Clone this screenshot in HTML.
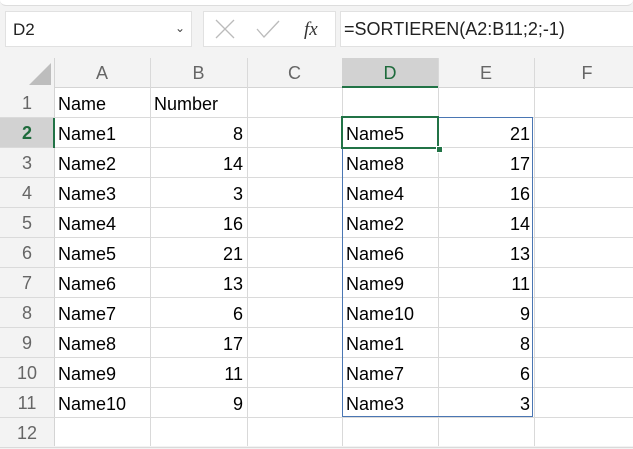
<!DOCTYPE html>
<html><head><style>
body{margin:0;width:633px;height:446px;overflow:hidden;background:#f3f3f3;font-family:"Liberation Sans",sans-serif;position:relative}
.a{position:absolute}
.box{position:absolute;background:#fff;border:1px solid #e1e1e1}
.c{position:absolute;font-size:18px;color:#000;line-height:30px;white-space:nowrap}
.h{position:absolute;color:#666;font-size:18px;text-align:center;line-height:31px}
</style></head><body>
<div class="a" style="left:0;top:0;width:633px;height:5px;background:#fff;border-bottom:1px solid #ddd;border-radius:0 0 6px 6px"></div>
<div class="box" style="left:5px;top:11px;width:185px;height:34px"></div>
<div class="c" style="left:13px;top:15px;font-size:17px;color:#222">D2</div>
<div class="c" style="left:175px;top:13px;font-size:12px;color:#444">&#8964;</div>
<div class="box" style="left:203px;top:11px;width:131px;height:34px"></div>
<svg class="a" style="left:214px;top:18px" width="110" height="22"><path d="M2 2L20 20M20 2L2 20" stroke="#bbb" stroke-width="1.3" fill="none"/><path d="M43 11L50 19L65 3" stroke="#bbb" stroke-width="1.3" fill="none"/><text x="90" y="17" font-family="Liberation Serif" font-style="italic" font-size="19" fill="#333">fx</text></svg>
<div class="box" style="left:340px;top:11px;width:300px;height:34px"></div>
<div class="c" style="left:344px;top:14px;font-size:18px;color:#222">=SORTIEREN(A2:B11;2;-1)</div>
<div class="a" style="left:0;top:58px;width:633px;height:388px;background:#fff"></div>
<div class="a" style="left:0;top:58px;width:633px;height:29px;background:#f3f3f3;border-bottom:1px solid #d4d4d4"></div>
<div class="a" style="left:0;top:58px;width:54px;height:388px;background:#f3f3f3;border-right:1px solid #d4d4d4"></div>
<svg class="a" style="left:28px;top:62px" width="24" height="24"><path d="M23 1V23H1Z" fill="#bdbdbd"/></svg>
<div id="g"></div>
<script>
var cols=[54,150,247,342,438,534,640],L="ABCDEF",s="";
for(var i=0;i<6;i++){var w=cols[i+1]-cols[i];
s+='<div class="h" style="left:'+cols[i]+'px;top:58px;width:'+w+'px;'+(i==3?'background:#d2d2d2;color:#1e6b3c;border-bottom:2px solid #217346;height:28px;':'')+'">'+L[i]+'</div>';
s+='<div class="a" style="left:'+cols[i+1]+'px;top:58px;width:1px;height:388px;background:#d9d9d9"></div>';}
for(var r=1;r<=12;r++){var y=88+(r-1)*30;
s+='<div class="h" style="left:0;top:'+y+'px;width:54px;height:29px;'+(r==2?'background:#d2d2d2;color:#1e6b3c;font-weight:bold;':'')+'">'+r+'</div>';
s+='<div class="a" style="left:0;top:'+(y+29)+'px;width:633px;height:1px;background:#dadada"></div>';}
var A=[["Name","Number"],["Name1",8],["Name2",14],["Name3",3],["Name4",16],["Name5",21],["Name6",13],["Name7",6],["Name8",17],["Name9",11],["Name10",9]];
var D=[["Name5",21],["Name8",17],["Name4",16],["Name2",14],["Name6",13],["Name9",11],["Name10",9],["Name1",8],["Name7",6],["Name3",3]];
function cell(x,w,y,t,right){return '<div class="c" style="left:'+x+'px;top:'+y+'px;width:'+w+'px;'+(right?'text-align:right;':'')+'">'+t+'</div>';}
for(var k=0;k<A.length;k++){var y=89+k*30;
s+=cell(58,90,y,A[k][0],false);
s+=k==0?cell(154,90,y,A[k][1],false):cell(150,93,y,A[k][1],true);}
for(var k=0;k<D.length;k++){var y=119+k*30;
s+=cell(346,90,y,D[k][0],false);s+=cell(438,92,y,D[k][1],true);}
s+='<div class="a" style="left:342px;top:117px;width:191px;height:300px;border:1px solid #4a76b3;box-sizing:border-box"></div>';
s+='<div class="a" style="left:341px;top:116px;width:98px;height:33px;border:2px solid #217346;box-sizing:border-box"></div>';
s+='<div class="a" style="left:436px;top:146px;width:5px;height:5px;background:#217346;border:1px solid #fff"></div>';
s+='<div class="a" style="left:53px;top:118px;width:2px;height:30px;background:#217346"></div>';
document.getElementById("g").innerHTML=s;
</script>
</body></html>
